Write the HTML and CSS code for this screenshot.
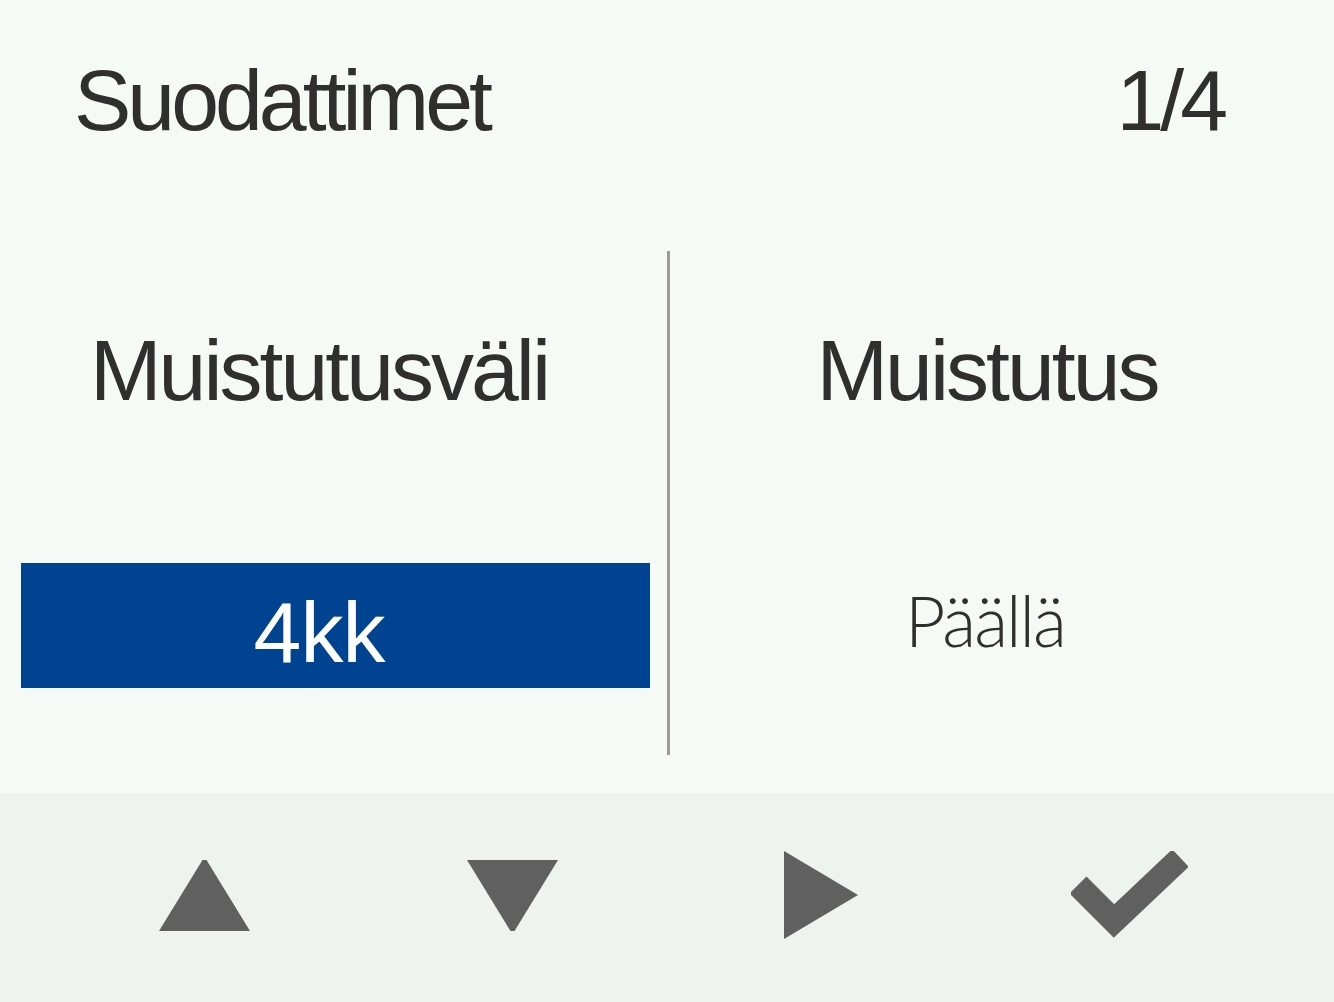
FILE: index.html
```html
<!DOCTYPE html>
<html lang="fi">
<head>
<meta charset="utf-8">
<title>Suodattimet</title>
<link rel="stylesheet" href="styles.css">
</head>
<body>
<div class="screen">

<div class="header">
<span class="title">Suodattimet</span>
<span class="pager">1/4</span>
</div>

<div class="columns">
<div class="col col-left">
<div class="label">Muistutusväli</div>
<div class="value selected">4kk</div>
</div>
<div class="divider"></div>
<div class="col col-right">
<div class="label">Muistutus</div>
<div class="value plain">Päällä</div>
</div>
</div>

<div class="buttons">
<div class="btn"><svg width="91" height="71" viewBox="0 0 91 71"><polygon points="43.5,0 47.5,0 91,71 0,71" /></svg></div>
<div class="btn"><svg width="91" height="71" viewBox="0 0 91 71"><polygon points="0,0 91,0 47.5,71 43.5,71" /></svg></div>
<div class="btn"><svg width="74" height="88" viewBox="0 0 74 88"><polygon points="0,0 74,44 0,88" /></svg></div>
<div class="btn"><svg width="117" height="88" viewBox="0 0 117 88"><polyline class="tick" points="7,34 43,70 109.5,7" /></svg></div>
</div>

</div>
</body>
</html>
```

FILE: styles.css
```css
body {margin:0; background-color:#f6faf7; font-family:"Liberation Sans", Arial, sans-serif; color:#2f2f2f;}

.screen {height:1002px; display:flex; flex-direction:column;}

.header {display:flex; justify-content:space-between; padding:57px 110px 0 74px; font-size:86px; line-height:86px; letter-spacing:-4px;}

.columns {display:flex; margin-top:108px; height:504px;}
.col {box-sizing:border-box; padding-top:76px;}
.col-left {width:667px; padding-left:21px; padding-right:17px;}
.col-right {flex:1; padding-right:30px;}
.divider {width:3px; background-color:#9b9b9b;}

.label {font-size:86px; line-height:86px; letter-spacing:-3px; text-align:center;}
.col-left .label {padding-right:33px;}

.value {margin-top:150px; height:125px; box-sizing:border-box; text-align:center;}
.selected {background-color:#004390; color:#ffffff; padding:26px 33px 0 0; font-size:86px; line-height:86px; letter-spacing:-1px;}
.plain {font-family:Lato, "Liberation Sans", sans-serif; font-weight:300; font-size:70px; line-height:114px; letter-spacing:-2px; padding-right:4px;}

.buttons {flex:1; margin-top:38px; background-color:#eef3ef; display:grid; grid-template-columns:repeat(4, 1fr); align-items:center; padding:0 50px 5px 50px;}
.btn {display:flex; justify-content:center;}
.btn svg {display:block; fill:#606060;}
.btn .tick {fill:none; stroke:#606060; stroke-width:24; stroke-linejoin:miter;}
```
